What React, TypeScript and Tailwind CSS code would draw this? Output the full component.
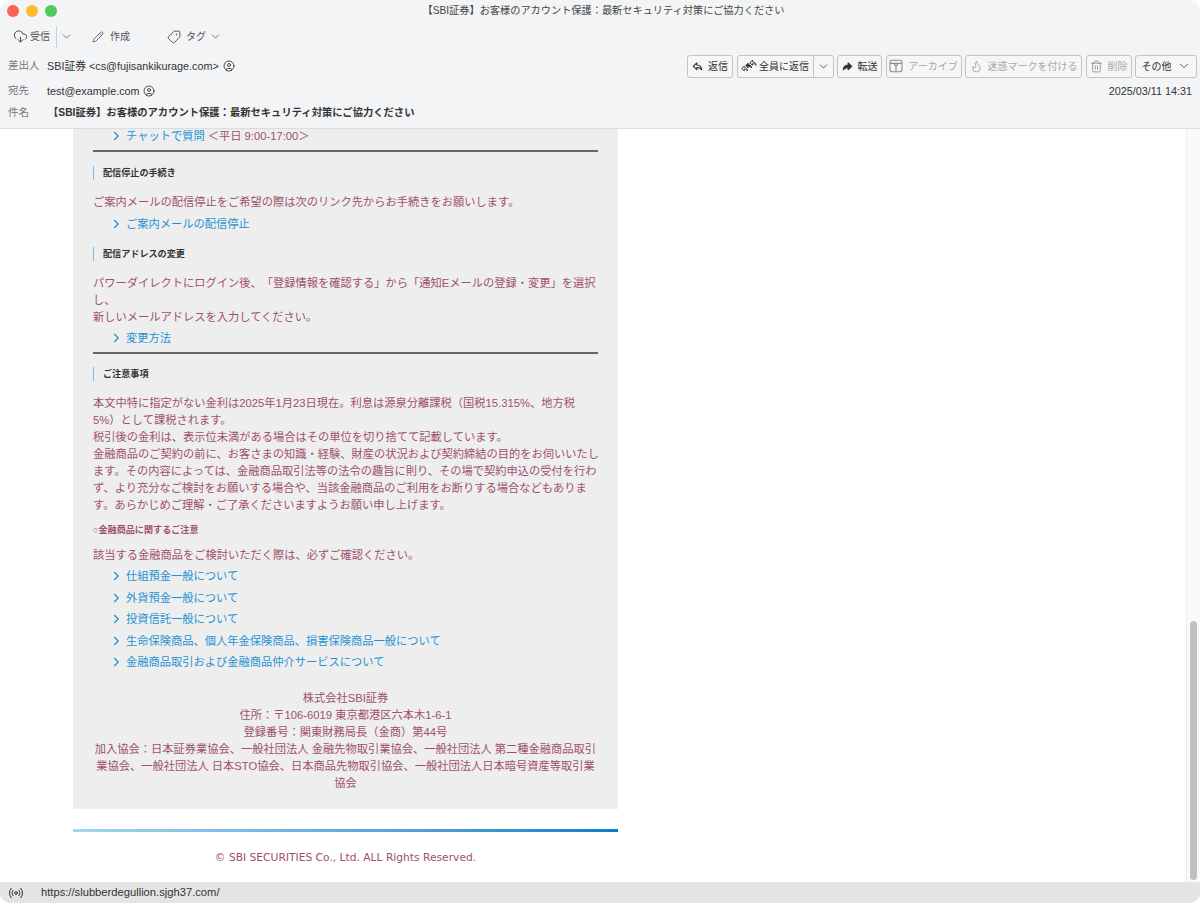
import { ChevronDown, CircleUser, CloudDownload, Pencil, Tag, Flame, Trash2, Radio } from 'lucide-react';
import type { ReactNode } from 'react';

const FONT = "font-['Liberation_Sans','Noto_Sans_CJK_JP',sans-serif]";
const SUBJECT = '【SBI証券】お客様のアカウント保護：最新セキュリティ対策にご協力ください';
const ARROW = 'M4.6 1L1 4.4l3.6 3.2V5.6c2-.2 3.7.4 4.8 2.2C9.3 5 7.4 3.2 4.6 3z';

function ReplyIcon({ flip }: { flip?: boolean }) {
  return (
    <svg width="11" height="9" viewBox="0 0 10.5 9" className={flip ? '-scale-x-100' : ''}>
      <path d={ARROW} fill={flip ? '#333' : 'none'} stroke="#333" strokeWidth="1.2" strokeLinejoin="round" />
    </svg>
  );
}

function ReplyAllIcon() {
  return (
    <svg width="16" height="14" viewBox="0 0 16 14">
      <g fill="none" stroke="#333" strokeWidth="1.3" strokeLinejoin="round">
        <path d={ARROW} transform="translate(0 6.5) scale(0.7)" />
        <path d={ARROW} transform="translate(4 3.5) scale(0.7)" fill="#333" />
        <path d={ARROW} transform="translate(8 0.5) scale(0.75)" />
      </g>
    </svg>
  );
}

function ArchiveIcon() {
  return (
    <svg width="14" height="14" viewBox="0 0 14 14" fill="none" stroke="#8c8c8c" strokeWidth="1.1">
      <rect x="1" y="1.2" width="12" height="11.6" rx="2" />
      <path d="M1 4.4h12M4.6 4.4L7 7.2l2.4-2.8M7 7.2v5.4" />
    </svg>
  );
}

function ToolButton({ children, width, disabled }: { children: ReactNode; width: string; disabled?: boolean }) {
  return (
    <div
      className={`flex h-[23px] items-center justify-center gap-[5px] rounded-[3px] border border-[#c4c4c4] bg-[#f6f6f6] text-[10px] ${width} ${
        disabled ? 'text-[#a8a8a8]' : 'text-[#333]'
      }`}
    >
      {children}
    </div>
  );
}

function MailLink({ children, tail }: { children: ReactNode; tail?: string }) {
  return (
    <div className="flex h-[14px] items-center pl-5 text-[11.25px] leading-[14px]">
      <svg width="7" height="10" viewBox="0 0 7 10" className="mr-[6px]" fill="none">
        <path d="M1.2 1l4 4-4 4" stroke="#1a8fd0" strokeWidth="1.2" />
      </svg>
      <span className="text-[#1f93d3]">{children}</span>
      {tail && <span className="ml-[3px] text-[#a0506e]">{tail}</span>}
    </div>
  );
}

function SectionHead({ children, className }: { children: ReactNode; className: string }) {
  return (
    <div className={`flex h-[14px] items-center border-l border-[#7cc0ea] pl-[9px] text-[9.1px] font-bold text-[#333] ${className}`}>
      {children}
    </div>
  );
}

export default function App() {
  return (
    <div className={`flex h-[903px] w-[1200px] flex-col overflow-hidden rounded-[10px] bg-white [text-spacing-trim:space-all] ${FONT}`}>
      <header className="h-[129px] shrink-0 border-b border-[#dcdcdc] bg-[#f3f4f6] text-[10.8px] text-[#333]">
        <div className="relative flex h-[21px] items-center justify-center pl-[7px] text-[10.2px] text-[#444]">
          <div className="absolute left-[7px] top-[5px] flex gap-[7px]">
            <span className="h-3 w-3 rounded-full bg-[#fe5f57]" />
            <span className="h-3 w-3 rounded-full bg-[#febc2e]" />
            <span className="h-3 w-3 rounded-full bg-[#4ecb5b]" />
          </div>
          {SUBJECT}
        </div>
        <div className="flex h-[30px] items-center pl-[13px] pt-[1px] text-[10px] text-[#555]">
          <CloudDownload size={15} strokeWidth={1.5} className="text-[#444]" />
          <span className="ml-[2px]">受信</span>
          <span className="ml-[6px] h-[22px] w-px bg-[#d0d0d0]" />
          <ChevronDown size={13} strokeWidth={1.4} className="ml-[3px]" />
          <Pencil size={12} strokeWidth={1.5} className="ml-[19px] text-[#444]" />
          <span className="ml-[6px]">作成</span>
          <Tag size={14} strokeWidth={1.5} className="ml-[37px] rotate-90 text-[#444]" />
          <span className="ml-[5px]">タグ</span>
          <ChevronDown size={13} strokeWidth={1.4} className="ml-[3px]" />
        </div>
        <div className="flex h-[30px] items-center pl-[8px] pr-[3px]">
          <span className="w-[39px] text-[10.5px] text-[#777]">差出人</span>
          <span>SBI証券 &lt;cs@fujisankikurage.com&gt;</span>
          <CircleUser size={12} strokeWidth={1.7} className="ml-[4px]" />
          <div className="ml-auto flex gap-[3.5px]">
            <ToolButton width="w-[46px]">
              <ReplyIcon />
              <span>返信</span>
            </ToolButton>
            <div className="flex h-[23px] w-[97px] items-center rounded-[3px] border border-[#c4c4c4] bg-[#f6f6f6] text-[10px] text-[#333]">
              <div className="flex w-[76px] items-center justify-center gap-[2px] border-r border-[#c4c4c4] leading-[21px]">
                <ReplyAllIcon />
                <span>全員に返信</span>
              </div>
              <ChevronDown size={13} strokeWidth={1.4} className="ml-[3px]" />
            </div>
            <ToolButton width="w-[45px]">
              <ReplyIcon flip />
              <span>転送</span>
            </ToolButton>
            <ToolButton width="w-[76px]" disabled>
              <ArchiveIcon />
              <span>アーカイブ</span>
            </ToolButton>
            <ToolButton width="w-[117px]" disabled>
              <Flame size={13} strokeWidth={1.3} className="text-[#888]" />
              <span>迷惑マークを付ける</span>
            </ToolButton>
            <ToolButton width="w-[46px]" disabled>
              <Trash2 size={13} strokeWidth={1.3} className="text-[#777]" />
              <span>削除</span>
            </ToolButton>
            <ToolButton width="w-[62px]">
              <span>その他</span>
              <ChevronDown size={14} strokeWidth={1.4} />
            </ToolButton>
          </div>
        </div>
        <div className="flex h-[20px] items-center pl-[8px] pr-[8px]">
          <span className="w-[39px] text-[10.5px] text-[#777]">宛先</span>
          <span>test@example.com</span>
          <CircleUser size={12} strokeWidth={1.7} className="ml-[3px]" />
          <span className="ml-auto">2025/03/11 14:31</span>
        </div>
        <div className="flex h-[23px] items-center pl-[8px] pt-[1px]">
          <span className="w-[40px] text-[10.5px] text-[#777]">件名</span>
          <span className="text-[10.3px] font-bold">{SUBJECT}</span>
        </div>
      </header>

      <div className="flex min-h-0 flex-1">
        <main className="min-w-0 flex-1 overflow-hidden bg-white pl-[73px]">
          <section className="w-[545px] bg-[#eeeeee] px-5 pb-[17px] text-[11.25px] leading-[17px] text-[#a0506e]">
            <MailLink tail="＜平日 9:00-17:00＞">チャットで質問</MailLink>
            <div className="mt-[7px] h-[2px] bg-[#666]" />
            <SectionHead className="mt-[14px]">配信停止の手続き</SectionHead>
            <p className="mt-[14px]">ご案内メールの配信停止をご希望の際は次のリンク先からお手続きをお願いします。</p>
            <div className="mt-[6px]">
              <MailLink>ご案内メールの配信停止</MailLink>
            </div>
            <SectionHead className="mt-[16px]">配信アドレスの変更</SectionHead>
            <p className="mt-[14px] whitespace-nowrap">
              パワーダイレクトにログイン後、「登録情報を確認する」から「通知Eメールの登録・変更」を選択
              <br />
              し、
              <br />
              新しいメールアドレスを入力してください。
            </p>
            <div className="mt-[5px]">
              <MailLink>変更方法</MailLink>
            </div>
            <div className="mt-[7px] h-[2px] bg-[#666]" />
            <SectionHead className="mt-[13px]">ご注意事項</SectionHead>
            <p className="mt-[14px] whitespace-nowrap">
              本文中特に指定がない金利は2025年1月23日現在。利息は源泉分離課税（国税15.315%、地方税
              <br />
              5%）として課税されます。
              <br />
              税引後の金利は、表示位未満がある場合はその単位を切り捨てて記載しています。
              <br />
              金融商品のご契約の前に、お客さまの知識・経験、財産の状況および契約締結の目的をお伺いいたし
              <br />
              ます。その内容によっては、金融商品取引法等の法令の趣旨に則り、その場で契約申込の受付を行わ
              <br />
              ず、より充分なご検討をお願いする場合や、当該金融商品のご利用をお断りする場合などもありま
              <br />
              す。あらかじめご理解・ご了承くださいますようお願い申し上げます。
            </p>
            <div className="mt-[9px] flex h-[14px] items-center text-[9.1px] font-bold">○金融商品に関するご注意</div>
            <p className="mt-[10px]">該当する金融商品をご検討いただく際は、必ずご確認ください。</p>
            <div className="mt-[5px] flex flex-col gap-[7.6px]">
              <MailLink>仕組預金一般について</MailLink>
              <MailLink>外貨預金一般について</MailLink>
              <MailLink>投資信託一般について</MailLink>
              <MailLink>生命保険商品、個人年金保険商品、損害保険商品一般について</MailLink>
              <MailLink>金融商品取引および金融商品仲介サービスについて</MailLink>
            </div>
            <div className="mt-[21px] whitespace-nowrap text-center">
              株式会社SBI証券
              <br />
              住所：〒106-6019 東京都港区六本木1-6-1
              <br />
              登録番号：関東財務局長（金商）第44号
              <br />
              加入協会：日本証券業協会、一般社団法人 金融先物取引業協会、一般社団法人 第二種金融商品取引
              <br />
              業協会、一般社団法人 日本STO協会、日本商品先物取引協会、一般社団法人日本暗号資産等取引業
              <br />
              協会
            </div>
          </section>
          <div className="mt-[20px] h-[3px] w-[545px] bg-gradient-to-r from-[#a5d5ee] to-[#0080c8]" />
          <p className="mt-[19px] w-[545px] text-center font-['DejaVu_Sans',sans-serif] text-[10.7px] leading-[14px] text-[#a0506e]">
            © SBI SECURITIES Co., Ltd. ALL Rights Reserved.
          </p>
        </main>
        <div className="flex w-[14px] shrink-0 flex-col justify-end border-l border-[#ececec] bg-[#fafafa] pb-[2px] pl-[3px]">
          <div className="h-[259px] w-[7px] rounded-full bg-[#c1c1c1]" />
        </div>
      </div>

      <footer className="flex h-[21px] shrink-0 items-center bg-[#e4e4e4] pl-[8px] text-[11.2px] text-[#333]">
        <Radio size={16} strokeWidth={1.5} />
        <span className="ml-[17px]">https://slubberdegullion.sjgh37.com/</span>
      </footer>
    </div>
  );
}
